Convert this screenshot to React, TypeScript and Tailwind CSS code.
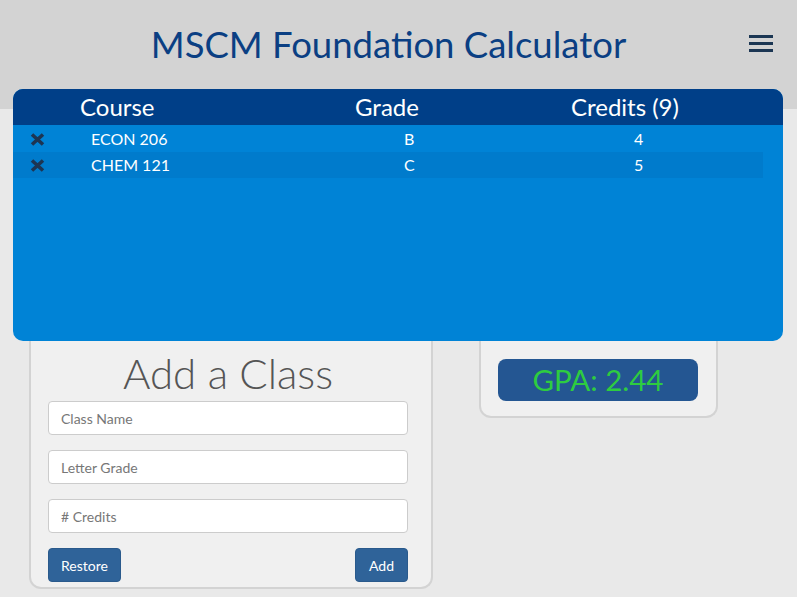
import React from "react";

function XIcon() {
  return (
    <svg width="15" height="13" viewBox="0 0 15 13" className="block">
      <path d="M2 1.5 L13 11.5 M13 1.5 L2 11.5" stroke="#1d3553" strokeWidth="3.6" strokeLinecap="butt" fill="none" />
    </svg>
  );
}

const rows = [
  { course: "ECON 206", grade: "B", credits: "4" },
  { course: "CHEM 121", grade: "C", credits: "5" },
];

export default function App() {
  return (
    <div className="relative w-full min-h-[597px] bg-[#e9e9e9] font-['Lato','Noto_Sans',sans-serif]">
      <header className="relative h-[109px] bg-[#d3d3d3] pt-[23px]">
        <h1 className="pr-[20px] text-center text-[36.5px] leading-[1.2] text-[#0b3f83] font-normal">
          MSCM Foundation Calculator
        </h1>
        <button className="absolute right-[24px] top-[35px] flex w-[24px] flex-col gap-[4px]">
          <span className="block h-[3px] w-[24px] bg-[#1b3653]" />
          <span className="block h-[3px] w-[24px] bg-[#1b3653]" />
          <span className="block h-[3px] w-[24px] bg-[#1b3653]" />
        </button>
      </header>

      <div className="flex items-start gap-[46px] pl-[29px] pt-[191px]">
        <div className="w-[404px] rounded-b-[12px] border-2 border-t-0 border-[#d3d3d3] bg-[#f0f0f0] pl-[17px] pr-[23px] pt-[48px] pb-[5px]">
          <h2 className="mb-[3px] text-center text-[42px] font-light leading-[1.2] text-[#555555]">Add a Class</h2>
          <div className="flex flex-col gap-[15px]">
            <input
              placeholder="Class Name"
              className="h-[34px] w-full rounded-[4px] border border-[#cccccc] bg-white px-[12px] text-[14px] text-[#555] placeholder:text-[#777777] outline-none"
            />
            <input
              placeholder="Letter Grade"
              className="h-[34px] w-full rounded-[4px] border border-[#cccccc] bg-white px-[12px] text-[14px] text-[#555] placeholder:text-[#777777] outline-none"
            />
            <input
              placeholder="# Credits"
              className="h-[34px] w-full rounded-[4px] border border-[#cccccc] bg-white px-[12px] text-[14px] text-[#555] placeholder:text-[#777777] outline-none"
            />
            <div className="flex justify-between">
              <button className="h-[34px] w-[73px] rounded-[4px] border border-[#2a5a8c] bg-[#2f6399] text-[14px] text-white">Restore</button>
              <button className="h-[34px] w-[53px] rounded-[4px] border border-[#2a5a8c] bg-[#2f6399] text-[14px] text-white">Add</button>
            </div>
          </div>
        </div>

        <div className="w-[239px] rounded-b-[12px] border-2 border-t-0 border-[#d3d3d3] bg-[#f0f0f0] pl-[17px] pr-[18px] pt-[59px] pb-[15px]">
          <div className="flex h-[42px] w-[200px] items-center justify-center rounded-[8px] bg-[#245692] text-[29.5px] leading-none text-[#2ecc40]">
            GPA: 2.44
          </div>
        </div>
      </div>

      <div className="absolute left-[13px] top-[89px] h-[252px] w-[770px] overflow-hidden rounded-[10px] bg-[#0083d6] text-white">
        <div className="flex h-[36px] items-center bg-[#003f88] text-[24px] leading-none">
          <div className="w-[67px]" />
          <div className="w-[275px]">Course</div>
          <div className="w-[216px]">Grade</div>
          <div>Credits (9)</div>
        </div>
        <div className="w-[750px] pt-[1px]">
          {rows.map((r, i) => (
            <div key={r.course} className={`flex h-[26px] items-center text-[16px] ${i % 2 === 1 ? "bg-[#007bcc]" : ""}`}>
              <div className="w-[60px] pl-[17px]">
                <XIcon />
              </div>
              <div className="w-[331px] pl-[18px]">{r.course}</div>
              <div className="w-[230px]">{r.grade}</div>
              <div>{r.credits}</div>
            </div>
          ))}
        </div>
      </div>
    </div>
  );
}
